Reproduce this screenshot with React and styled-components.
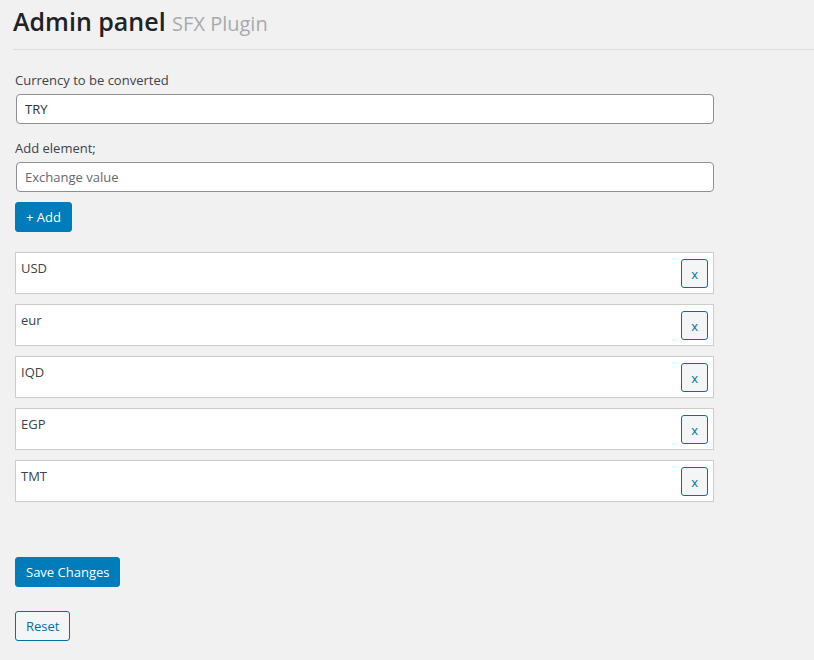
import styled, { createGlobalStyle } from 'styled-components'

const GlobalStyle = createGlobalStyle`
  body {
    margin: 0;
    background: #f1f1f1;
    font-family: 'Open Sans', 'Noto Sans', sans-serif;
    color: #3c434a;
    font-size: 13px;
  }
`

const Wrap = styled.div`
  padding: 0 0 20px 13px;
`

const Header = styled.h1`
  margin: 0;
  padding: 3px 0 7px;
  font-size: 25px;
  font-weight: 600;
  color: #1d2327;
  line-height: 37px;
  border-bottom: 1px solid #dcdcde;
  span {
    font-size: 20px;
    font-weight: 400;
    color: #a7aaad;
    margin-left: 0;
  }
`

const Form = styled.form`
  padding: 21px 0 0 2px;
  width: 699px;
`

const Label = styled.label`
  display: block;
  line-height: 18px;
  margin-bottom: 5px;
`

const Input = styled.input`
  display: block;
  box-sizing: border-box;
  width: 698px;
  height: 30px;
  margin: 0 0 15px 1px;
  padding: 0 8px;
  border: 1px solid #8c8f94;
  border-radius: 4px;
  background: #fff;
  font-family: inherit;
  font-size: 13px;
  color: #2c3338;
  &::placeholder {
    color: #646970;
  }
`

const Button = styled.button`
  display: block;
  box-sizing: border-box;
  height: ${(p) => (p.small ? '29px' : '30px')};
  padding: 0 ${(p) => (p.small ? '9px' : '10px')};
  border-radius: 3px;
  font-family: inherit;
  font-size: 13px;
  cursor: pointer;
  border: 1px solid ${(p) => (p.primary ? '#007cba' : '#0071a1')};
  background: ${(p) => (p.primary ? '#007cba' : '#f3f5f6')};
  color: ${(p) => (p.primary ? '#fff' : '#0071a1')};
`

const AddRow = styled.div`
  margin: -5px 0 20px;
`

const List = styled.ul`
  list-style: none;
  margin: 0;
  padding: 0;
  display: flex;
  flex-direction: column;
  gap: 10px;
`

const Item = styled.li`
  box-sizing: border-box;
  height: 42px;
  display: flex;
  justify-content: space-between;
  align-items: flex-start;
  padding: 6px 5px 0 5px;
  background: #fff;
  border: 1px solid #ccc;
  span {
    line-height: 18px;
  }
`

const Actions = styled.div`
  display: flex;
  flex-direction: column;
  align-items: flex-start;
  gap: 24px;
  margin-top: 55px;
`

const currencies = ['USD', 'eur', 'IQD', 'EGP', 'TMT']

export default function App() {
  return (
    <Wrap>
      <GlobalStyle />
      <Header>
        Admin panel <span>SFX Plugin</span>
      </Header>
      <Form onSubmit={(e) => e.preventDefault()}>
        <Label>Currency to be converted</Label>
        <Input defaultValue='TRY' />
        <Label>Add element;</Label>
        <Input placeholder='Exchange value' />
        <AddRow>
          <Button primary type='button'>
            + Add
          </Button>
        </AddRow>
        <List>
          {currencies.map((c) => (
            <Item key={c}>
              <span>{c}</span>
              <Button small type='button'>
                x
              </Button>
            </Item>
          ))}
        </List>
        <Actions>
          <Button primary type='submit'>
            Save Changes
          </Button>
          <Button type='button'>Reset</Button>
        </Actions>
      </Form>
    </Wrap>
  )
}
